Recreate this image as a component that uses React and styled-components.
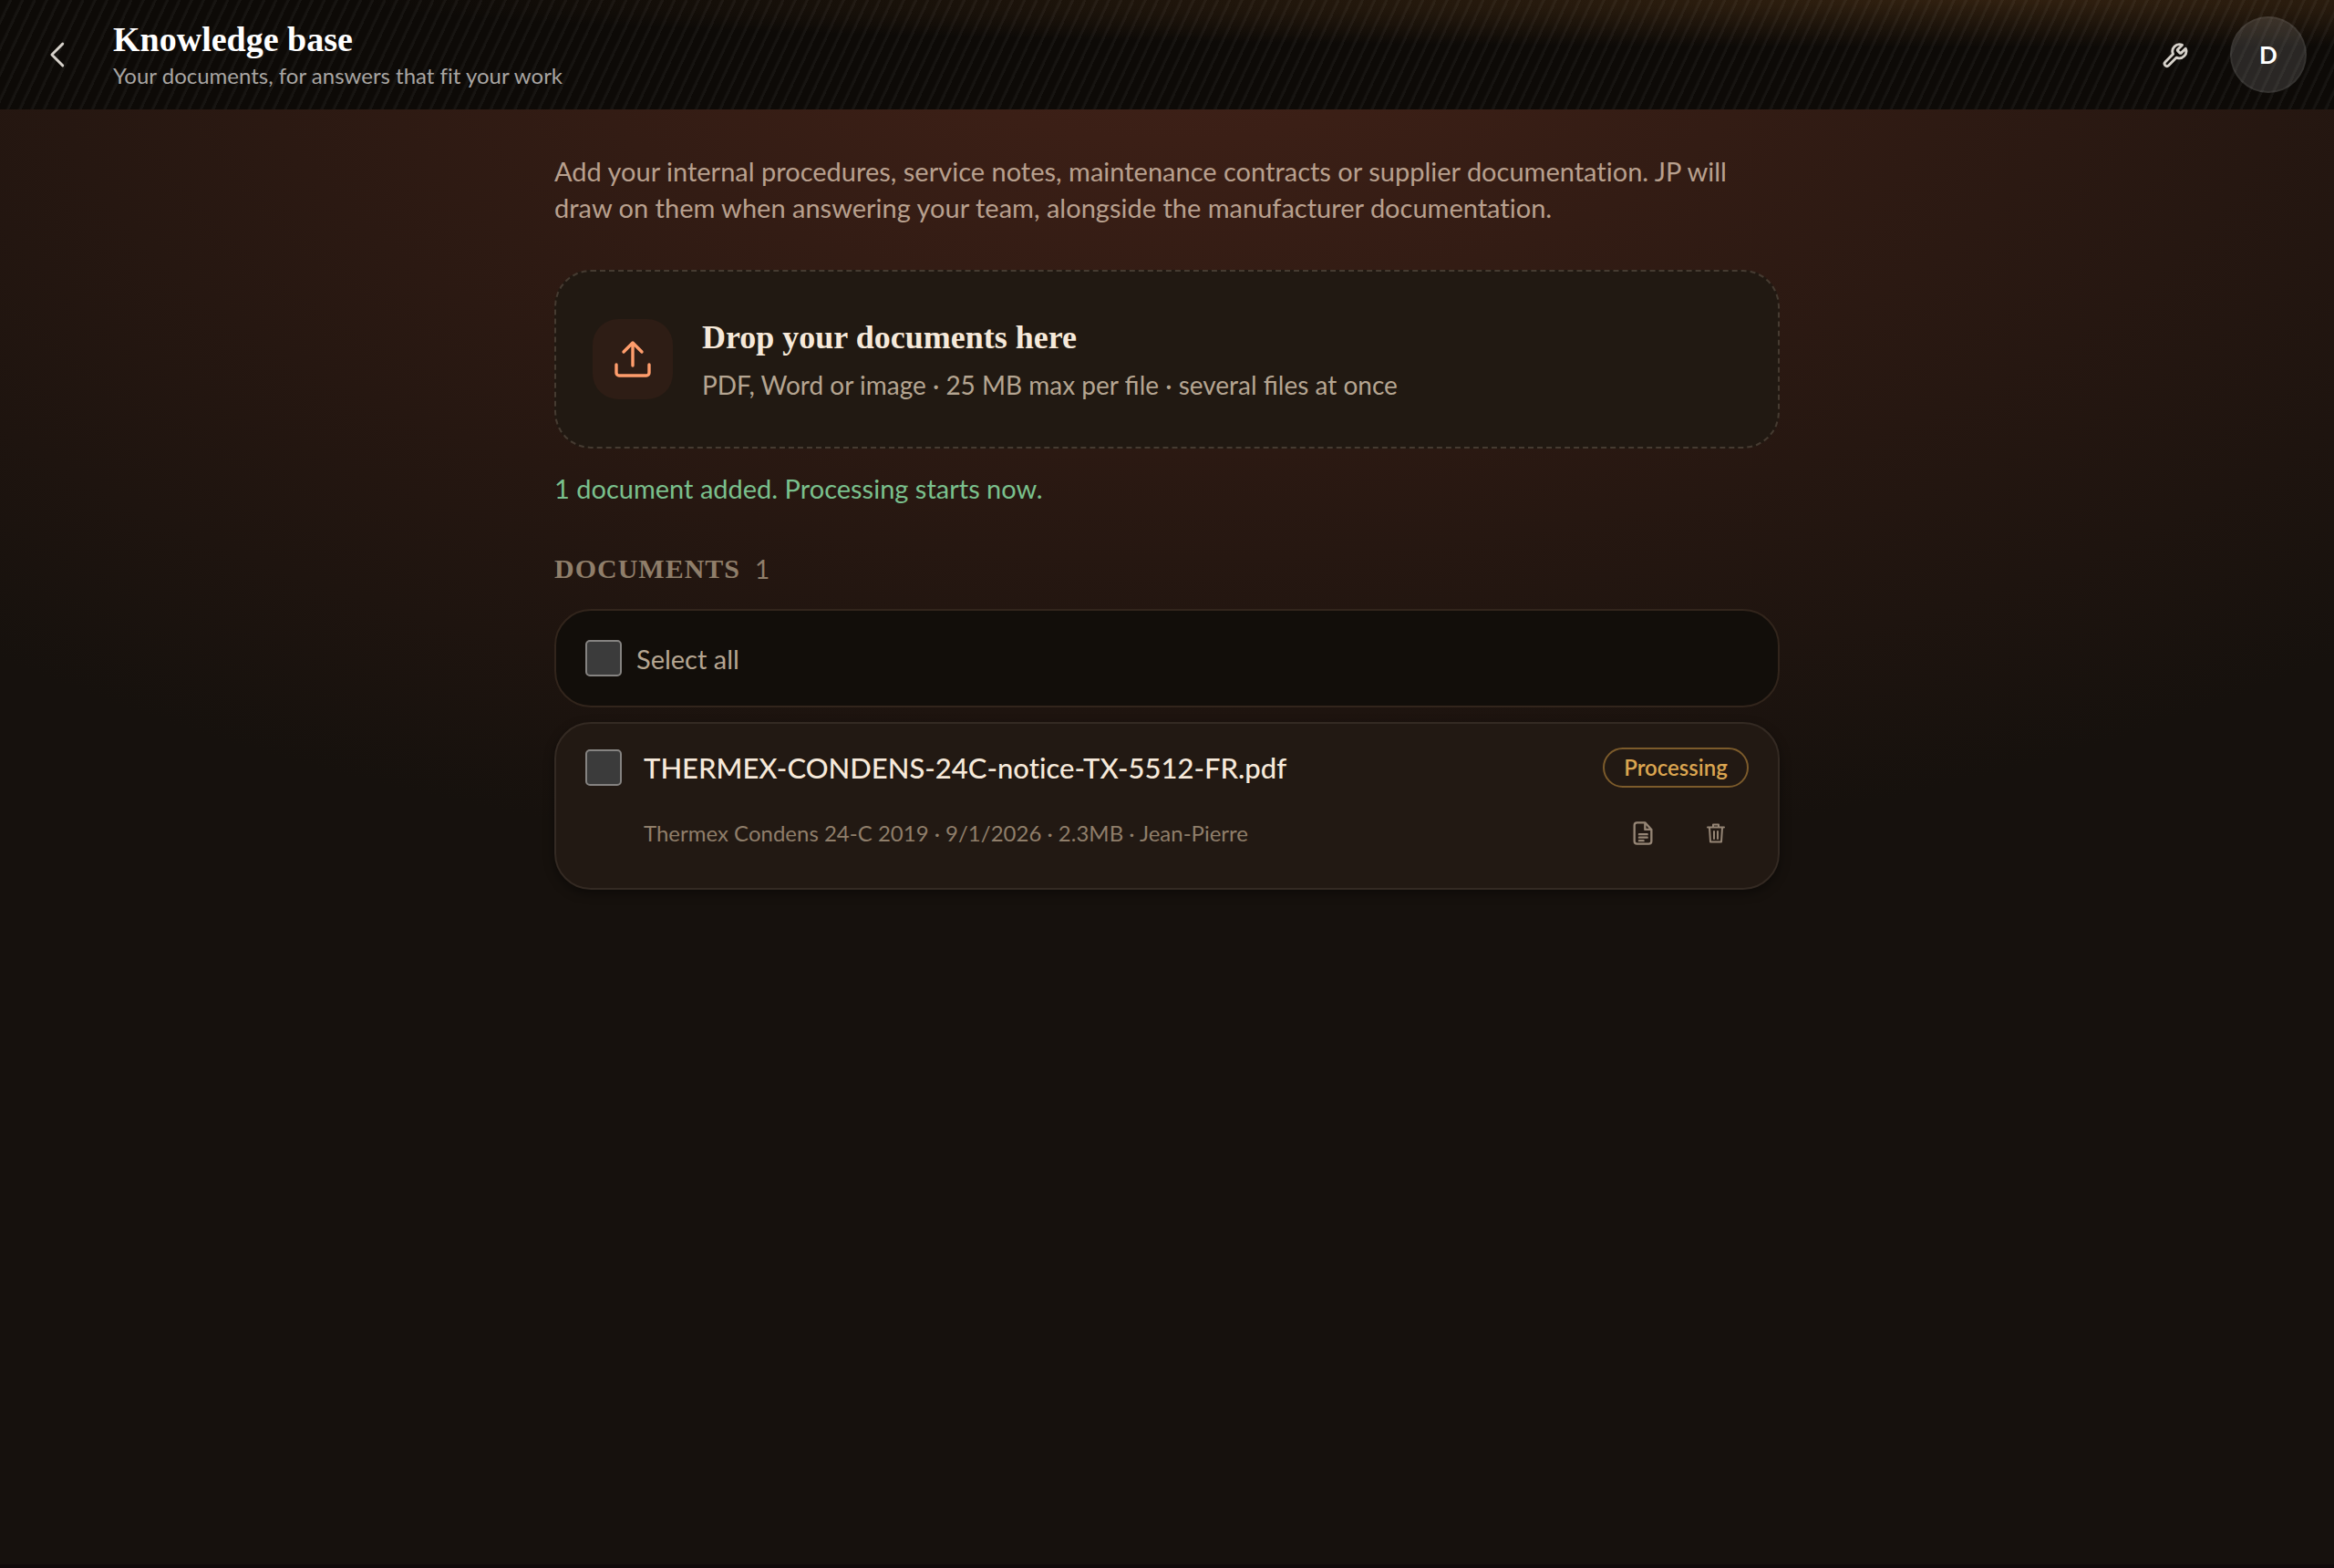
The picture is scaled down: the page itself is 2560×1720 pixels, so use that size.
import styled, { createGlobalStyle } from "styled-components";

const sans = `Lato, "Open Sans", sans-serif`;
const serif = `"Liberation Serif", serif`;

const GlobalStyle = createGlobalStyle`
  * {
    box-sizing: border-box;
  }
  body {
    margin: 0;
    background: #16110d;
    font-family: ${sans};
    font-variant-ligatures: no-common-ligatures;
  }
`;

const Page = styled.div`
  min-height: 100vh;
  display: flex;
  flex-direction: column;
  border-bottom: 4px solid #100a0a;
  background: radial-gradient(ellipse 76% 960px at 50% 0, #40221a 0%, #3b1f16 16%, #16110d 100%);
`;

const TopBar = styled.header`
  display: flex;
  align-items: center;
  height: 120px;
  padding: 0 30px 0 24px;
  background:
    repeating-linear-gradient(
      115deg,
      transparent 0 8px,
      rgba(255, 255, 255, 0.045) 10px 12px
    ),
    radial-gradient(ellipse 70% 52px at 85% 0, rgba(190, 120, 50, 0.2), transparent),
    #0d0a07;
`;

const IconButton = styled.button`
  display: flex;
  align-items: center;
  justify-content: center;
  width: 80px;
  height: 80px;
  padding: 0;
  border: 0;
  background: none;
  color: ${(p) => p.$color || "#d6d1ca"};
  cursor: pointer;
`;

const Titles = styled.div`
  flex: 1;
  margin-left: 20px;
  padding-top: 2px;
`;

const PageTitle = styled.h1`
  margin: 0;
  font: 700 38px/44px ${serif};
  color: #fff;
`;

const Subtitle = styled.p`
  margin: 0;
  font-size: 24px;
  line-height: 36px;
  color: #a8a5a2;
`;

const Avatar = styled.button`
  width: 84px;
  height: 84px;
  margin-left: 20px;
  border: 2px solid rgba(255, 255, 255, 0.05);
  border-radius: 50%;
  background: rgba(255, 255, 255, 0.12);
  color: #fff;
  font: 700 26px/1 ${sans};
`;

const Main = styled.main`
  width: 100%;
  max-width: 1344px;
  margin: 0 auto;
  padding: 48px 0;
`;

const Intro = styled.p`
  margin: 0;
  font-size: 29px;
  line-height: 40px;
  color: #b8a08e;
`;

const DropZone = styled.button`
  display: flex;
  align-items: center;
  gap: 32px;
  width: 100%;
  height: 196px;
  margin-top: 48px;
  padding: 0 40px;
  border: 2px dashed #453b31;
  border-radius: 40px;
  background: #211912;
  text-align: left;
  cursor: pointer;
`;

const UploadTile = styled.span`
  display: flex;
  align-items: center;
  justify-content: center;
  width: 88px;
  height: 88px;
  border-radius: 28px;
  background: #2e1d15;
  color: #ff9d6c;
`;

const DropText = styled.span`
  display: flex;
  flex-direction: column;
  gap: 8px;
`;

const DropTitle = styled.span`
  font: 700 36px/48px ${serif};
  color: #f6e9da;
`;

const DropHint = styled.span`
  font: 28px/40px ${sans};
  color: #b5a591;
`;

const Status = styled.p`
  margin: 24px 0 0;
  font-size: 29px;
  line-height: 40px;
  color: #7ac08d;
`;

const SectionTitle = styled.h2`
  display: flex;
  align-items: center;
  gap: 16px;
  margin: 48px 0 24px;
  font: 700 30px/40px ${serif};
  letter-spacing: 1px;
  color: #8f7e6a;
`;

const Count = styled.span`
  font: 28px/40px ${sans};
`;

const SelectAll = styled.label`
  display: flex;
  align-items: center;
  gap: 16px;
  height: 108px;
  padding: 0 32px;
  border: 2px solid #32251c;
  border-radius: 40px;
  background: #120e0a;
  font-size: 29px;
  color: #b5a591;
`;

const Checkbox = styled.input`
  appearance: none;
  flex: none;
  width: 40px;
  height: 40px;
  margin: 0;
  border: 2px solid #858381;
  border-radius: 5px;
  background: #3b3b3b;
  &:checked {
    background: #ff9d6c;
  }
`;

const DocumentCard = styled.article`
  display: grid;
  grid-template-columns: 40px 1fr auto;
  column-gap: 24px;
  align-items: center;
  margin-top: 16px;
  padding: 16px 32px 20px;
  border: 2px solid #342a23;
  border-radius: 40px;
  background: #221913;
  box-shadow: 0 4px 12px rgba(0, 0, 0, 0.4);
`;

const FileName = styled.label`
  font-size: 31px;
  font-weight: 500;
  line-height: 64px;
  color: #f6e9da;
`;

const Badge = styled.span`
  min-width: 160px;
  padding: 0 20px;
  border: 2px solid #7c5b2b;
  border-radius: 22px;
  font-size: 24px;
  font-weight: 600;
  line-height: 40px;
  text-align: center;
  color: #dba550;
`;

const Meta = styled.p`
  grid-column: 2;
  margin: 0;
  font-size: 24px;
  line-height: 40px;
  color: #8f7e6a;
`;

const Actions = styled.div`
  display: flex;
  justify-self: end;
  margin-right: -4px;
`;

const Svg = ({ size, width = 2, children }) => (
  <svg
    width={size}
    height={size}
    viewBox="0 0 24 24"
    fill="none"
    stroke="currentColor"
    strokeWidth={width}
    strokeLinecap="round"
    strokeLinejoin="round"
    aria-hidden="true"
  >
    {children}
  </svg>
);

const App = () => {
  return (
    <Page>
      <GlobalStyle />
      <TopBar>
        <IconButton aria-label="Back">
          <Svg size={38} width={1.8}>
            <path d="M15 4.500 7.500 12l7.500 7.500" />
          </Svg>
        </IconButton>
        <Titles>
          <PageTitle>Knowledge base</PageTitle>
          <Subtitle>Your documents, for answers that fit your work</Subtitle>
        </Titles>
        <IconButton aria-label="Tools">
          <Svg size={30} width={2.3}>
            <path d="M14.2 7.300a1 1 0 0 0 0 1.4l1.6 1.6a1 1 0 0 0 1.4 0l3.77-3.77a6 6 0 0 1-7.94 7.94l-6.91 6.91a2.12 2.12 0 0 1-3-3l6.91-6.91a6 6 0 0 1 7.94-7.94z" />
          </Svg>
        </IconButton>
        <Avatar aria-label="Account">D</Avatar>
      </TopBar>
      <Main>
        <Intro>
          Add your internal procedures, service notes, maintenance contracts or supplier documentation. JP will
          draw on them when answering your team, alongside the manufacturer documentation.
        </Intro>
        <DropZone>
          <UploadTile>
            <Svg size={48} width={1.7}>
              <path d="M12 15.500V3M7 8l5-5 5 5M3 15v4.500A1.500 1.500 0 0 0 4.500 21h15a1.500 1.500 0 0 0 1.500-1.500V15" />
            </Svg>
          </UploadTile>
          <DropText>
            <DropTitle>Drop your documents here</DropTitle>
            <DropHint>PDF, Word or image · 25 MB max per file · several files at once</DropHint>
          </DropText>
        </DropZone>
        <Status role="status">1 document added. Processing starts now.</Status>
        <SectionTitle>
          DOCUMENTS <Count>1</Count>
        </SectionTitle>
        <SelectAll>
          <Checkbox type="checkbox" />
          Select all
        </SelectAll>
        <DocumentCard>
          <Checkbox type="checkbox" id="doc-1" />
          <FileName htmlFor="doc-1">THERMEX-CONDENS-24C-notice-TX-5512-FR.pdf</FileName>
          <Badge>Processing</Badge>
          <Meta>Thermex Condens 24-C 2019 · 9/1/2026 · 2.3MB · Jean-Pierre</Meta>
          <Actions>
            <IconButton $color="#958575" aria-label="Open document">
              <Svg size={28}>
                <path d="M14 2H6.500A2.500 2.500 0 0 0 4 4.500v15A2.500 2.500 0 0 0 6.500 22h11a2.500 2.500 0 0 0 2.500-2.500V8.500zM14 2v6.500h6M8.500 13h7.500M8.500 16h7.500M8.500 19h4" />
              </Svg>
            </IconButton>
            <IconButton $color="#958575" aria-label="Delete document">
              <Svg size={24}>
                <path d="M3 5.500h18M9 5V2.500h6V5M5 6l1 15.500h12L19 6M10 10v8M14 10v8" />
              </Svg>
            </IconButton>
          </Actions>
        </DocumentCard>
      </Main>
    </Page>
  );
};

export default App;
